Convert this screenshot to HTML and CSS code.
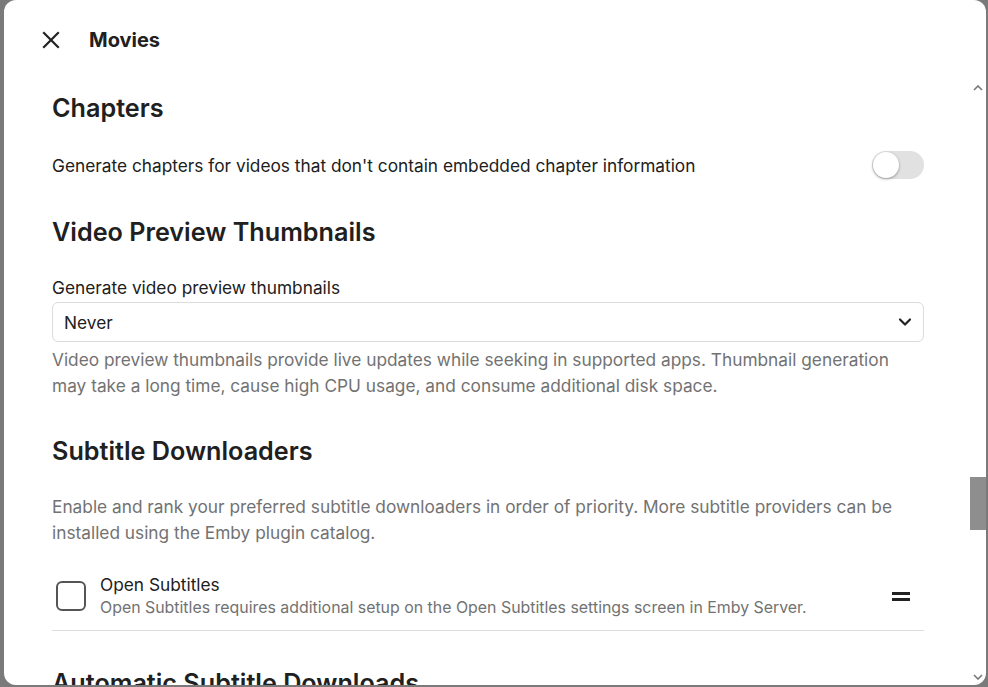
FILE: index.html
```html
<!DOCTYPE html>
<html lang="en">
<head>
  <meta charset="UTF-8" />
  <title>Movies</title>
  <link rel="stylesheet" href="styles.css">
</head>
<body>

<div class="dialog">
  <div class="dialog-header">
    <button class="close-btn" aria-label="Close">
      <svg viewBox="0 0 24 24" width="24" height="24"><path d="M5 5L19 19M19 5L5 19" stroke="#222" stroke-width="2.2" stroke-linecap="square" fill="none"/></svg>
    </button>
    <h1 class="dialog-title">Movies</h1>
  </div>

  <div class="dialog-body">
    <div class="scroll-content">
      <h2 class="section-title first">Chapters</h2>
      <div class="toggle-row">
        <span>Generate chapters for videos that don't contain embedded chapter information</span>
        <span class="toggle"><span class="knob"></span></span>
      </div>

      <h2 class="section-title">Video Preview Thumbnails</h2>
      <label class="field-label">Generate video preview thumbnails</label>
      <div class="select">
        <span>Never</span>
        <svg viewBox="0 0 24 24" width="20" height="20"><path d="M6 9l6 6 6-6" stroke="#222" stroke-width="2.6" fill="none" stroke-linecap="round" stroke-linejoin="round"/></svg>
      </div>
      <p class="field-desc">Video preview thumbnails provide live updates while seeking in supported apps. Thumbnail generation may take a long time, cause high CPU usage, and consume additional disk space.</p>

      <h2 class="section-title">Subtitle Downloaders</h2>
      <p class="field-desc intro">Enable and rank your preferred subtitle downloaders in order of priority. More subtitle providers can be installed using the Emby plugin catalog.</p>
      <div class="list-item">
        <span class="checkbox"></span>
        <div class="item-text">
          <div class="item-title">Open Subtitles</div>
          <div class="item-sub">Open Subtitles requires additional setup on the Open Subtitles settings screen in Emby Server.</div>
        </div>
        <span class="drag-handle"><span></span><span></span></span>
      </div>

      <h2 class="section-title">Automatic Subtitle Downloads</h2>
    </div>

    <div class="scrollbar">
      <svg class="arrow up" viewBox="0 0 10 6" width="10" height="6"><path d="M1 5l4-4 4 4" stroke="#777" stroke-width="1.6" fill="none"/></svg>
      <div class="thumb"></div>
      <svg class="arrow down" viewBox="0 0 10 6" width="10" height="6"><path d="M1 1l4 4 4-4" stroke="#777" stroke-width="1.6" fill="none"/></svg>
    </div>
  </div>
</div>

</body>
</html>
```

FILE: styles.css
```css
body {
  margin: 0;
  padding: 0;
  background: #7a7a7a;
  font-family: Inter, "Noto Sans", sans-serif;
  color: #202020;
  overflow: hidden;
}

.dialog {
  margin-left: 4px;
  width: 982px;
  height: 685px;
  background: #fff;
  border-radius: 12px;
  display: flex;
  flex-direction: column;
  overflow: hidden;
}

.dialog-header {
  height: 80px;
  flex-shrink: 0;
  display: flex;
  align-items: center;
  padding-left: 35px;
}

.close-btn {
  border: none;
  background: none;
  padding: 0;
  width: 24px;
  height: 24px;
  display: flex;
}

.dialog-title {
  margin: 0 0 0 26px;
  font-size: 20px;
  font-weight: 700;
  line-height: 24px;
}

.dialog-body {
  flex: 1;
  position: relative;
  overflow: hidden;
}

.scroll-content {
  padding: 0 62px 0 48px;
  font-size: 17.3px;
}

.section-title {
  margin: 37px 0 0;
  font-size: 25.2px;
  font-weight: 600;
  line-height: 30px;
}

.section-title.first {
  margin-top: 13px;
}

.toggle-row {
  margin-top: 27px;
  display: flex;
  align-items: center;
  justify-content: space-between;
  height: 30px;
}

.toggle {
  width: 52px;
  height: 28px;
  border-radius: 14px;
  background: #e1e1e1;
  display: flex;
  align-items: center;
  padding-left: 1px;
  box-sizing: border-box;
}

.toggle .knob {
  width: 26px;
  height: 26px;
  border-radius: 50%;
  background: #fff;
  box-shadow: 0 1px 3px rgba(0, 0, 0, 0.35);
}

.field-label {
  display: block;
  margin-top: 29px;
  line-height: 24px;
}

.select {
  margin-top: 2px;
  height: 40px;
  box-sizing: border-box;
  border: 1px solid #dcdcdc;
  border-radius: 6px;
  display: flex;
  align-items: center;
  justify-content: space-between;
  padding: 0 8px 0 11px;
}

.field-desc {
  margin: 5px 0 0;
  line-height: 26px;
  color: #727272;
}

.field-desc.intro {
  margin-top: 28px;
}

.list-item {
  margin-top: 23px;
  display: flex;
  align-items: center;
  padding: 4px 0 11px 4px;
  border-bottom: 1px solid #dedede;
}

.checkbox {
  width: 30px;
  height: 30px;
  box-sizing: border-box;
  border: 2px solid #555;
  border-radius: 6px;
  flex-shrink: 0;
}

.item-text {
  flex: 1;
  margin-left: 14px;
}

.item-title {
  line-height: 24px;
}

.item-sub {
  font-size: 15.9px;
  line-height: 22px;
  color: #727272;
}

.drag-handle {
  width: 18px;
  display: flex;
  flex-direction: column;
  gap: 3px;
  margin-right: 14px;
}

.drag-handle span {
  height: 3px;
  background: #222;
}

.scrollbar {
  position: absolute;
  top: 0;
  right: 0;
  bottom: 0;
  width: 16px;
}

.scrollbar .arrow {
  position: absolute;
  left: 3px;
}

.scrollbar .arrow.up {
  top: 5px;
}

.scrollbar .arrow.down {
  bottom: 5px;
}

.scrollbar .thumb {
  position: absolute;
  top: 397px;
  left: 0;
  width: 16px;
  height: 53px;
  background: #8e8e8e;
}
```
